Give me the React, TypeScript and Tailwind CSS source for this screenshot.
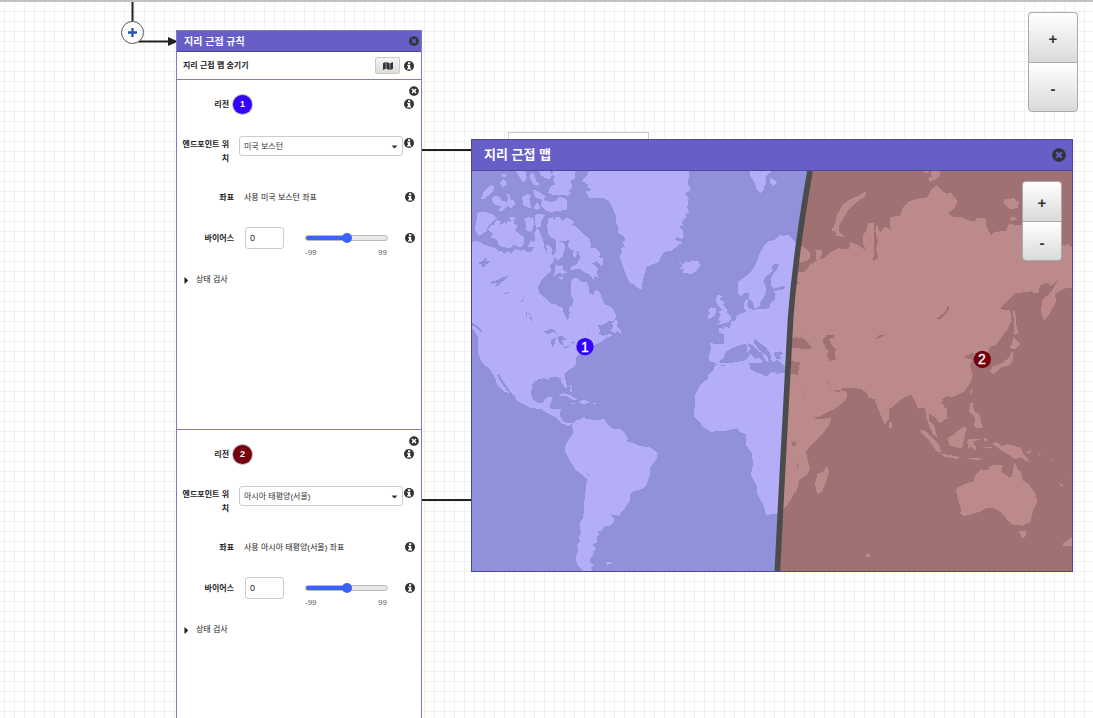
import { useState } from 'react';
import { FaCaretDown, FaCaretRight, FaMap, FaTimesCircle } from 'react-icons/fa';

type Region = {
  id: number;
  location: string;
  coordinates: string;
  badge: string;
};

const regions: Region[] = [
  { id: 1, location: '미국 보스턴', coordinates: '사용 미국 보스턴 좌표', badge: 'bg-[#3300ff]' },
  { id: 2, location: '아시아 태평양(서울)', coordinates: '사용 아시아 태평양(서울) 좌표', badge: 'bg-[#73000c]' },
];

function InfoButton({ label }: { label: string }) {
  return (
    <button type="button" aria-label={label} className="ml-auto shrink-0 text-[#333]">
      <svg viewBox="0 0 20 20" className="size-[10px]" aria-hidden="true">
        <circle cx="10" cy="10" r="10" fill="currentColor" />
        <path d="M8 2.500H12.500V6H8ZM6.500 7.500H12.500V14H14V17H6.500V14H8V10.500H6.500Z" fill="#fff" />
      </svg>
    </button>
  );
}

function RegionForm({ region }: { region: Region }) {
  const [bias, setBias] = useState(0);
  const id = `region-${region.id}`;
  return (
    <section className="relative h-[350px] border-b border-[#7f7ac8] pt-[14px]">
      <button type="button" aria-label="삭제" className="absolute top-[6px] right-[2px] text-[#333]">
        <FaTimesCircle className="size-[10px]" />
      </button>
      <div className="flex h-5 items-center pr-[7px]">
        <span className="w-[52px] pt-[2px] text-right font-bold">리전</span>
        <span
          className={`ml-1 flex size-[19px] items-center justify-center rounded-full text-[9px] font-bold text-white ring-1 ring-[#bbb] ${region.badge}`}
        >
          {region.id}
        </span>
        <InfoButton label="리전 정보" />
      </div>
      <div className="mt-[22px] flex h-7 items-start pr-[7px]">
        <label htmlFor={`${id}-location`} className="w-[52px] pt-[2px] pl-[5px] text-right leading-[14px] font-bold">
          엔드포인트 위치
        </label>
        <div className="relative ml-[10px] w-[164px]">
          <select
            id={`${id}-location`}
            className="block h-5 w-full appearance-none rounded-[3px] border border-[#ccc] bg-white pt-[2px] pl-[4px] text-[#333]"
          >
            <option>{region.location}</option>
          </select>
          <FaCaretDown className="pointer-events-none absolute top-[6px] right-[4px] size-[9px] text-[#333]" />
        </div>
        <span className="ml-auto flex pt-[2px]">
          <InfoButton label="엔드포인트 정보" />
        </span>
      </div>
      <div className="mt-[23px] flex h-5 items-center pr-[6px]">
        <span className="w-[57px] pt-[2px] text-right font-bold">좌표</span>
        <span className="ml-[10px] pt-[2px]">{region.coordinates}</span>
        <InfoButton label="좌표 정보" />
      </div>
      <div className="mt-[20px] flex h-[31px] items-start pr-[6px]">
        <label htmlFor={`${id}-bias`} className="w-[57px] pt-[1px] text-right leading-[22px] font-bold">
          바이어스
        </label>
        <input
          id={`${id}-bias`}
          value={bias}
          onChange={(event) => setBias(Number(event.target.value) || 0)}
          className="ml-[11px] h-[22px] w-[39px] rounded-[3px] border border-[#ccc] bg-white pl-[4px] text-[9px]"
        />
        <div className="ml-[21px] w-[83px] pt-[6px]">
          <input
            type="range"
            aria-label="바이어스"
            min={-99}
            max={99}
            value={bias}
            onChange={(event) => setBias(Number(event.target.value))}
            className="block h-[10px] w-full appearance-none bg-transparent [&::-webkit-slider-runnable-track]:h-[6px] [&::-webkit-slider-runnable-track]:rounded-full [&::-webkit-slider-runnable-track]:border [&::-webkit-slider-runnable-track]:border-[#bbb] [&::-webkit-slider-runnable-track]:bg-[linear-gradient(90deg,#3b63fb_50%,#e8e8e8_50%)] [&::-webkit-slider-thumb]:-mt-[3px] [&::-webkit-slider-thumb]:size-[10px] [&::-webkit-slider-thumb]:appearance-none [&::-webkit-slider-thumb]:rounded-full [&::-webkit-slider-thumb]:bg-[#3b63fb]"
          />
          <div className="mt-[5px] flex justify-between pr-px leading-[10px] text-[#666]">
            <span>-99</span>
            <span>99</span>
          </div>
        </div>
        <span className="ml-auto flex pt-[6px]">
          <InfoButton label="바이어스 정보" />
        </span>
      </div>
      <button type="button" className="mt-[12px] ml-[4px] flex h-5 items-center gap-1">
        <FaCaretRight className="size-[11px]" />
        <span>상태 검사</span>
      </button>
    </section>
  );
}

function ZoomButtons({ size }: { size: string }) {
  const button =
    'block border-[#aaa] bg-linear-to-b from-white to-[#dadada] pt-[2px] text-[15px] font-bold text-[#333] leading-none';
  return (
    <div className="flex flex-col">
      <button type="button" aria-label="확대" className={`${button} ${size} rounded-t border border-b-0`}>
        +
      </button>
      <button type="button" aria-label="축소" className={`${button} ${size} rounded-b border`}>
        -
      </button>
    </div>
  );
}

const redArea = 'M1020 123C996 260 975 400 962 560C950 750 936 1060 922 1323H1810V123Z';

function WestLand() {
  return (
    <g fill="#b4aef8">
      {/* Canada, arctic coast and Labrador */}
      <path d="M6 338L15 333L30 336L45 345L60 350L78 354L86 366L92 362L104 372L112 364L124 370L136 357L150 362L166 358L168 366L182 368L192 352L190 335L196 330L193 310L200 296L208 300L213 318L220 330L222 350L228 364L231 374L229 345L238 346L247 358L244 372L254 378L250 396L240 408L245 424L230 434L214 450L205 470L206 488L228 506L244 522L262 524L268 531L278 533L282 552L294 571L299 550L296 532L306 526L311 510L305 502L302 484L303 468L305 448L322 443L334 455L350 457L356 470L356 488L369 496L378 478L388 486L398 507L402 522L421 530L436 548L438 562L434 571L414 574L408 582L386 586L374 596L354 608L348 614L366 600L384 588L391 600L386 612L398 618L420 612L428 617L410 623L395 635L378 644L25 650L23 620L14 605L6 595Z" />
      <path d="M437 569L444 575L440 588L453 600L455 613L443 604L436 609L421 602L430 590L426 580Z" />
      {/* Arctic islands */}
      <path d="M22 248L45 246L70 253L80 266L68 274L54 290L49 303L38 312L28 318L14 300L19 276Z" />
      <path d="M78 270L92 274L90 286L104 276L112 288L112 272L122 276L118 262L135 262L132 280L143 286L136 302L148 312L160 318L163 338L156 352L145 350L130 345L122 355L98 351L88 348L82 330L62 322L68 310L54 300L60 288L72 283Z" />
      <path d="M65 166L72 170L70 184L58 196L48 202L42 209L33 206L40 188L55 170Z" />
      <path d="M92 131L106 131L110 139L98 141ZM100 147L110 155L108 166L98 172L89 160ZM138 123H166L170 140L168 153L158 156L146 138ZM182 128L193 132L198 154L207 160L204 168L191 163L180 148ZM208 123H239L246 134L240 148L224 144L212 135Z" />
      <path d="M250 123H317L314 146L303 151L306 172L296 184L304 188L291 201L288 194L246 194L234 188L243 168L256 163L248 150L256 143L246 132Z" />
      <path d="M72 198L88 200L98 214L112 215L114 202L108 191L120 194L122 210L133 210L134 224L124 234L112 228L106 236L94 244L86 241L94 230L72 222L66 208Z" />
      <path d="M156 202L174 191L184 198L178 207L183 234L171 232L160 224ZM189 179L203 183L214 191L225 196L222 211L245 216L258 212L266 202L283 203L293 216L290 241L261 242L247 246L228 243L213 225L217 210L196 202ZM199 219L208 222L209 236L198 239L191 234Z" />
      <path d="M163 267L175 260L184 266L187 258L192 276L189 299L179 307L166 296L168 285ZM196 254L214 251L224 256L215 271L211 291L199 294L195 278ZM184 331L194 343L195 352L174 351L178 339Z" />
      <path d="M236 266L248 262L254 271L258 261L272 263L276 274L286 264L302 266L312 278L303 285L316 288L328 301L344 315L358 326L363 345L360 352L376 354L390 369L388 382L400 386L397 410L379 394L366 400L384 414L380 430L386 443L376 438L370 449L354 430L338 425L332 416L301 420L304 410L322 401L331 382L326 366L306 360L292 349L298 331L264 334L242 322L233 308L232 285Z" />
      <path d="M258 332L282 338L285 354L277 381L263 392L251 376L258 362ZM257 398L266 410L276 404L281 420L292 428L278 432L266 428L250 440L256 422ZM269 440L280 442L276 450L267 447ZM311 360L322 366L317 382L308 378Z" />
      {/* Greenland */}
      <path d="M358 123L348 140L335 152L348 160L356 164L350 170L366 180L348 184L356 203L400 205L418 214L429 238L438 258L439 280L446 293L443 308L462 320L466 331L458 336L465 350L451 354L457 364L449 378L457 405L466 429L480 460L495 464L501 475L515 476L518 452L530 410L550 402L565 396L574 378L584 366L605 362L638 336L615 330L622 320L634 328L641 322L638 302L626 290L640 288L634 276L648 264L646 252L657 248L652 232L656 208L646 190L662 180L654 160L658 123Z" />
      <path d="M628 394L640 403L645 394L660 396L666 390L674 394L686 392L690 408L678 424L662 432L638 427L642 418L630 416L638 406Z" />
      {/* United States, Mexico and Central America */}
      <path d="M25 640H376L360 652L346 662L326 672L318 684L319 702L310 711L292 724L283 734L287 752L292 772L287 776L275 758L272 744L257 741L240 743L236 749L222 744L204 748L187 762L183 790L188 808L205 819L219 817L228 806L234 801L249 801L243 817L238 835L255 837L272 838L270 858L278 873L293 879L309 880L296 888L274 880L258 863L240 854L214 838L196 835L180 833L154 820L139 811L137 800L120 784L106 764L96 748L86 732L81 737L90 752L100 766L109 778L116 788L106 787L94 777L80 762L76 746L64 725L56 713L45 708L32 690L25 672Z" />
      {/* Caribbean */}
      <path d="M263 796L282 789L302 796L324 810L307 810L290 798ZM326 812L348 811L361 818L342 822L330 820ZM303 819H314V823H303ZM369 819H378V822H369ZM297 764L307 768V774L300 771ZM301 778H306V785H301Z" />
      {/* South America */}
      <path d="M306 882L318 872L336 866L341 859L348 868L361 867L370 872L404 867L408 877L420 890L432 897L451 897L466 911L474 928L469 934L485 938L512 948L543 953L563 970L560 986L541 1012L540 1035L528 1068L518 1076L490 1084L480 1094L480 1112L462 1138L446 1157L420 1154L432 1164L431 1176L420 1188L399 1190L397 1202L383 1204L388 1216L380 1220L382 1238L367 1242L378 1259L366 1266L372 1270L360 1290L363 1301L372 1306L344 1321L334 1316L320 1302L318 1279L324 1263L322 1246L330 1232L324 1223L332 1212L330 1178L340 1162L342 1122L351 1046L318 1021L302 996L284 962L288 942L299 924L310 910Z" />
      <path d="M336 1323L343 1306L362 1310L366 1323ZM405 1299L424 1294L426 1300L412 1304Z" />
      {/* Svalbard */}
      <path d="M840 123H905L890 136L887 156L880 182L870 189L858 174L854 156L842 141ZM900 143L912 150L920 158L912 168L901 160Z" />
      {/* British Isles */}
      <path d="M742 495L756 498L750 508L763 516L760 524L770 538L772 548L783 561L781 572L770 578L741 584L754 574L743 570L752 556L746 544L758 540L748 530L740 520L738 506ZM724 532L737 534L739 544L732 560L715 567L714 557L722 548L714 543Z" />
      {/* Scandinavia and continental Europe */}
      <path d="M804 455L826 440L844 424L860 396L870 369L882 348L896 333L914 330L928 315L942 318L953 314L964 323L976 337L990 345V760L945 733L918 729L904 725L892 739L872 731L860 723L838 718L836 704L839 696L831 690L818 694L784 700L760 706L744 704L731 696L719 695L717 680L723 652L720 640L736 641L763 642L762 612L746 607L747 594L762 597L760 589L779 594L784 574L796 571L802 556L817 549L829 545L821 532L825 510L836 508L832 522L836 534L848 540L866 536L888 537L899 532L903 516L914 510L917 494L911 483L932 480L947 474L939 468L912 476L903 467L904 441L923 414L927 402L912 401L906 412L908 424L888 440L880 452L888 474L886 496L872 512L870 528L854 535L848 518L838 506L836 488L822 490L812 499L805 492L805 478Z" />
      {/* Africa */}
      <path d="M738 703L760 708L792 695L838 690L838 713L861 724L888 740L901 723L920 732L980 735V1153L908 1151L891 1157L885 1146L882 1128L868 1103L860 1085L860 1069L843 1035L850 1000L844 967L827 945L829 913L809 906L801 895L766 903L722 905L706 896L692 881L672 858L672 838L676 830V792L692 763L716 745L715 734L729 722Z" />
    </g>
  );
}

function WestWater() {
  return (
    <g fill="#9190da">
      {/* Lakes */}
      <path d="M28 396L40 393L42 386L52 384L48 393L62 394L54 401L46 404L44 411L32 409L38 402L26 402ZM62 456L84 450L96 442L116 438L98 454L84 467L74 468L80 460L64 461ZM102 491L120 485L112 492L104 494ZM151 516L162 500L156 517ZM177 544L182 558L190 577L180 566ZM169 543L172 553L168 562ZM222 605L240 597L252 599L264 614L248 606L230 614ZM244 630L258 622L252 648L245 652ZM262 621L276 617L290 630L276 631L282 648L268 640ZM276 654L302 645L290 654ZM303 637L315 634L306 642Z" />
      <path d="M6 577L20 586L35 600L34 608L22 595L6 586ZM350 1028L360 1036L358 1038Z" />
      {/* Mediterranean and Black Sea */}
      <path d="M744 697L763 681L768 665L783 656L803 648L824 641L830 645V668L844 654L859 669L872 682L856 686L842 672L834 682L828 690L780 700ZM830 639L846 644L860 659L878 671L882 686L892 695L882 697L868 682L850 666L836 648ZM852 625L868 638L887 652L900 668L904 690L908 696L922 690L944 707L944 730L906 726L892 740L872 732L840 717L838 700L896 696L892 678L872 665L853 640ZM911 668L934 664L940 672L928 675L934 686L918 686Z" />
    </g>
  );
}

function EastLand() {
  return (
    <g fill="#bc8a8a">
      {/* Kola and northern islands */}
      <path d="M985 345L1002 352L1018 365L1022 382L1008 393L992 398L980 392ZM1188 184L1188 198L1166 212L1146 228L1130 247L1120 266L1108 286L1108 304L1122 320L1098 319L1096 305L1084 301L1096 282L1098 261L1110 240L1114 228L1136 210L1164 198ZM1350 123H1378L1372 130ZM1382 123H1408L1410 139L1394 149L1380 156L1374 143L1386 140ZM1604 207L1630 205L1638 212L1649 216L1642 234L1622 238L1602 222ZM1618 266L1630 258L1642 270L1626 272Z" />
      {/* Eurasia */}
      <path d="M950 430L965 420L978 427L1006 424L1020 404L1040 392L1036 360L1054 358L1056 372L1050 388L1064 384L1082 367L1106 355L1138 358L1140 336L1162 344L1188 361L1178 340L1180 314L1190 300L1194 278L1212 278L1212 346L1210 394L1224 382L1218 358L1224 333L1216 304L1220 282L1230 308L1244 290L1264 299L1260 292V262L1292 256L1298 235L1318 214L1344 206L1372 202L1384 178L1400 166L1418 183L1428 191L1444 189L1463 214L1454 234L1434 250L1450 260L1474 262L1512 276L1520 263L1546 264L1550 292L1564 317L1574 306L1608 302L1617 282L1650 286L1680 284L1740 330L1785 348L1792 341L1810 356V475L1785 475L1765 485L1755 495L1758 515L1740 550L1722 572L1713 544L1716 510L1735 495L1750 475L1765 448L1752 460L1740 470L1736 460L1725 458L1710 470L1705 488L1692 490L1684 484L1636 490L1610 515L1590 535L1606 541L1620 540L1625 572L1610 602L1590 628L1576 646L1560 650L1546 690L1530 706L1518 690L1510 668L1490 676L1484 682L1506 690L1500 706L1508 735L1500 760L1482 784L1456 798L1424 808L1414 818L1430 838L1433 864L1408 880L1395 862L1376 850L1378 872L1392 886L1402 922L1388 912L1376 884L1368 860L1366 832L1345 836L1335 814L1324 794L1302 802L1258 838L1257 868L1244 884L1236 865L1226 840L1214 808L1196 802L1190 790L1174 776L1116 774L1112 782L1090 780L1066 744L1074 760L1092 782L1104 786L1122 782L1134 792L1126 812L1092 838L1036 864L1026 853L1010 810L988 776L974 750L960 743V700L940 680V440Z" />
      {/* East Africa */}
      <path d="M930 735H968L980 762L996 790L1020 828L1034 866L1050 868L1084 862L1079 882L1052 918L1018 950L1008 966L1014 992L1020 1018L1012 1034L988 1050L980 1083L970 1094L960 1114L938 1142H924Z" />
      <path d="M1072 1008L1077 1024L1066 1062L1056 1086L1042 1091L1035 1064L1042 1032L1060 1024ZM1256 876L1264 874L1266 892L1256 896Z" />
      {/* Japan and Taiwan */}
      <path d="M1630 541L1636 545L1638 580L1645 610L1632 616L1631 576ZM1630 622L1652 642L1636 656L1618 655L1626 642ZM1627 658L1629 690L1618 705L1594 712L1572 734L1560 724L1570 708L1596 700L1618 682ZM1506 776L1508 782L1504 796L1500 786Z" />
      {/* Indonesia, Philippines and New Guinea */}
      <path d="M1350 900L1364 902L1388 924L1406 942L1414 966L1402 966L1380 936L1356 912ZM1410 970L1432 974L1474 982L1460 987L1424 980ZM1474 983L1538 984L1532 988L1524 992L1496 986ZM1432 925L1450 914L1474 894L1486 890L1492 902L1486 908L1476 956L1458 952L1438 946ZM1492 932L1500 926L1526 927L1530 929L1508 936L1518 950L1516 964L1504 950L1494 958ZM1500 818L1508 820L1512 842L1528 852L1534 878L1536 894L1522 896L1512 888L1516 866L1498 844ZM1542 924L1550 924L1550 936L1542 932ZM1534 950L1570 952L1550 956ZM1564 940L1580 936L1592 944L1596 950L1612 942L1654 954L1660 972L1682 996L1668 992L1648 982L1634 988L1610 970L1590 958ZM1664 970L1686 958L1688 950L1680 968ZM1706 968L1714 974L1710 978ZM1732 980L1750 996L1740 990ZM1780 1024L1788 1034L1784 1032ZM1766 1058L1782 1068L1776 1070Z" />
      {/* Australia and neighbours */}
      <path d="M1460 1074L1490 1060L1510 1054L1516 1036L1534 1018L1552 1022L1560 1008L1574 1004L1596 1006L1598 1010L1594 1026L1618 1042L1626 1038L1632 1000L1636 1000L1644 1020L1654 1030L1658 1050L1678 1064L1696 1090L1701 1114L1688 1148L1680 1178L1658 1187L1626 1184L1608 1164L1598 1154L1594 1148L1578 1136L1550 1134L1530 1144L1508 1152L1482 1158L1470 1150L1474 1138L1464 1106L1458 1084ZM1647 1202H1668L1668 1218L1656 1226ZM1810 1216L1796 1228L1780 1240L1780 1248L1810 1248ZM1188 1273H1200V1280H1188Z" />
    </g>
  );
}

function EastWater() {
  return (
    <g fill="#9f7172">
      {/* Black Sea, Caspian Sea and lakes */}
      <path d="M968 440L980 440L976 450L992 460L978 464ZM956 634L978 620L990 625L1000 609L994 624L1008 630L1024 652L1024 656L990 656L964 652ZM964 694L990 696L984 734L964 732ZM1057 630L1070 616L1094 614L1092 622L1078 628L1086 646L1098 660L1094 670L1098 690L1078 692L1070 676L1076 664L1066 652ZM1218 626L1226 616L1250 613L1238 618L1222 626ZM1400 566L1422 550L1436 526L1436 538L1424 556L1406 570ZM964 936L976 934L978 946L966 948ZM980 990L984 1002V1020L980 1016Z" />
      {/* Hainan strait */}
      <path d="M1416 808L1432 798L1444 802L1442 820L1426 824ZM1426 808V816H1436L1438 806Z" fillRule="evenodd" />
    </g>
  );
}

function WorldMap() {
  return (
    <svg viewBox="6 123 1800 1200" className="block w-full" role="img" aria-label="지리 근접 맵">
      <defs>
        <clipPath id="red-area">
          <path d={redArea} />
        </clipPath>
      </defs>
      <rect x="6" y="123" width="1800" height="1200" fill="#9190da" />
      <g shapeRendering="crispEdges">
        <WestLand />
        <WestWater />
      </g>
      <path d={redArea} fill="#9f7172" />
      <g clipPath="url(#red-area)" shapeRendering="crispEdges">
        <EastLand />
        <EastWater />
      </g>
      <path d="M1020 123C996 260 975 400 962 560C950 750 936 1060 922 1323" fill="none" stroke="#4b4b4b" strokeWidth="17" />
      <g fontFamily="Liberation Sans, sans-serif" fontSize="42" fill="#fff" stroke="#fff" strokeWidth="1" textAnchor="middle">
        <circle cx="345" cy="650" r="26" fill="#3300ff" stroke="none" />
        <text x="345" y="665">1</text>
        <circle cx="1537" cy="688" r="26" fill="#73000c" stroke="none" />
        <text x="1536" y="703">2</text>
      </g>
    </svg>
  );
}

function Connectors() {
  return (
    <svg className="absolute top-0 left-0 h-[718px] w-[700px]" aria-hidden="true">
      <g stroke="#222" strokeWidth="2" fill="none">
        <path d="M132.500 2V22M138 41.500H170M422 150H472M422 500H472" />
      </g>
      <path d="M168 37L178 41.500L168 46Z" fill="#222" />
      <rect x="508.500" y="132.500" width="140" height="40" fill="#fff" stroke="#ccc" />
    </svg>
  );
}

export default function App() {
  return (
    <main className="relative h-screen overflow-hidden border-t-2 border-[#c2c2c2] bg-white bg-[linear-gradient(90deg,#f0f0f0_1px,transparent_1px),linear-gradient(#f0f0f0_1px,transparent_1px)] bg-[size:10px_10px] bg-[position:4px_9px] font-['Liberation_Sans','Noto_Sans_CJK_KR',sans-serif] text-[8px] leading-[12px] text-[#222]">
      <div className="absolute -top-[2px] left-0">
        <Connectors />

        <button
          type="button"
          aria-label="추가"
          className="absolute top-[21px] left-[121px] flex size-[23px] items-center justify-center rounded-full border border-[#555] bg-white"
        >
          <svg viewBox="0 0 9 9" className="size-[9px]">
            <path d="M4.500 0V9M0 4.500H9" stroke="#2457b8" strokeWidth="2.400" />
          </svg>
        </button>

        <article className="absolute top-[30px] left-[176px] w-[246px] border border-[#7f7ac8] bg-white">
          <header className="flex h-[21px] items-center border-b border-[#4c469c] bg-[#675ec8] pr-[2px] pl-[7px]">
            <h2 className="pt-[2px] text-[10px] font-bold text-white">지리 근접 규칙</h2>
            <button type="button" aria-label="닫기" className="ml-auto text-[#333]">
              <FaTimesCircle className="size-[10px]" />
            </button>
          </header>
          <div className="flex h-[28px] items-center border-b border-[#7f7ac8] pr-[7px] pl-[6px]">
            <span className="font-bold">지리 근접 맵 숨기기</span>
            <button
              type="button"
              aria-label="지리 근접 맵 숨기기"
              className="ml-auto flex h-[17px] w-[25px] items-center justify-center rounded-[2px] border border-[#ccc] bg-linear-to-b from-[#f4f4f4] to-[#ddd] text-[#333]"
            >
              <FaMap className="size-[10px]" />
            </button>
            <span className="ml-1 flex pt-px">
              <InfoButton label="맵 정보" />
            </span>
          </div>
          {regions.map((region) => (
            <RegionForm key={region.id} region={region} />
          ))}
        </article>

        <article className="absolute top-[139px] left-[471px] w-[602px] border border-[#4c469c]">
          <header className="flex h-[31px] items-center border-b border-[#4c469c] bg-[#675ec8] pr-[6px] pl-3">
            <h2 className="text-[13px] font-bold text-white">지리 근접 맵</h2>
            <button type="button" aria-label="맵 닫기" className="ml-auto text-[#333]">
              <FaTimesCircle className="size-[14px]" />
            </button>
          </header>
          <WorldMap />
          <div className="absolute top-[41px] right-[10px]">
            <ZoomButtons size="size-10" />
          </div>
        </article>
      </div>

      <div className="absolute top-[10px] right-[15px]">
        <ZoomButtons size="size-[50px]" />
      </div>
    </main>
  );
}
